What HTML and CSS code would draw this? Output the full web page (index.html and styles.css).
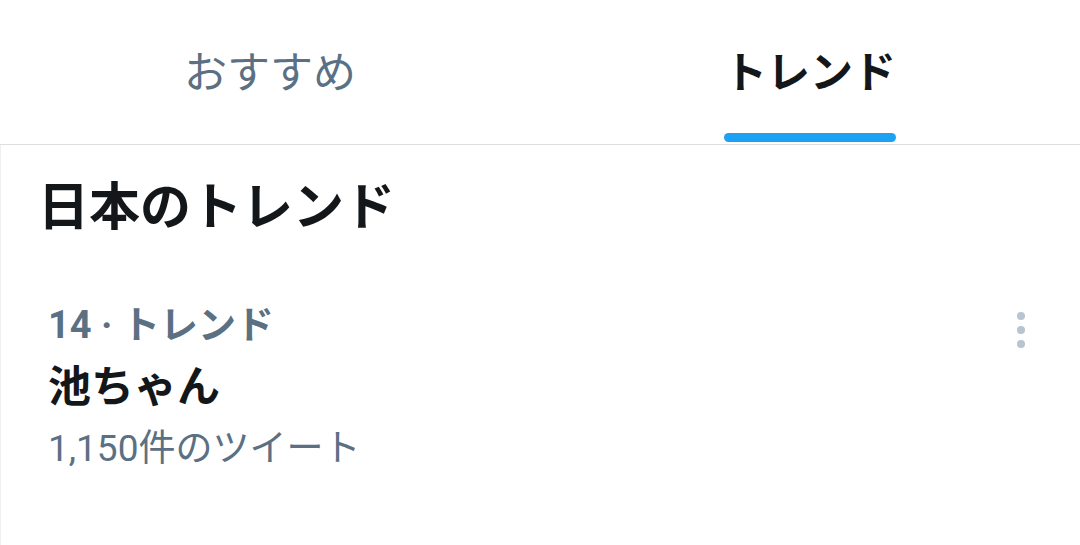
FILE: index.html
```html
<!DOCTYPE html>
<html lang="ja">
<head>
    <meta charset="UTF-8">
    <meta name="viewport" content="width=device-width, initial-scale=1.0">
    <title>トレンド</title>
    <link rel="stylesheet" href="styles.css">
</head>
<body>
    <div class="page">
        <!-- タブ -->
        <nav class="tabs">
            <div class="tab">
                <div class="tab-inner">
                    <span class="tab-label">おすすめ</span>
                </div>
            </div>
            <div class="tab active">
                <div class="tab-inner">
                    <span class="tab-label">トレンド</span>
                    <div class="tab-indicator"></div>
                </div>
            </div>
        </nav>

        <div class="content">
            <h1 class="section-title">日本のトレンド</h1>

            <div class="trend">
                <div class="trend-body">
                    <div class="trend-meta">14 · トレンド</div>
                    <div class="trend-name">池ちゃん</div>
                    <div class="trend-count">1,150件のツイート</div>
                </div>
                <div class="trend-more">
                    <span class="dot"></span>
                    <span class="dot"></span>
                    <span class="dot"></span>
                </div>
            </div>
        </div>
    </div>
</body>
</html>
```

FILE: styles.css
```css
body {
    margin: 0;
    padding: 0;
    background-color: #ffffff;
    font-family: Roboto, "Noto Sans CJK JP", sans-serif;
    color: #14171a;
}
.page {
    width: 1080px;
    height: 545px;
    overflow: hidden;
}
.tabs {
    display: flex;
    border-bottom: 1px solid #dcdfe2;
}
.tab {
    flex: 1;
    display: flex;
    justify-content: center;
    height: 144px;
}
.tab-inner {
    display: flex;
    flex-direction: column;
    padding: 0 3px;
}
.tab-label {
    margin-top: 48px;
    line-height: 50px;
    font-size: 43px;
    color: #5b7083;
}
.tab.active .tab-label {
    font-weight: bold;
    color: #14171a;
}
.tab-indicator {
    margin-top: auto;
    margin-bottom: 2px;
    height: 9px;
    border-radius: 5px;
    background-color: #1da1f2;
}
.content {
    height: 400px;
    border-left: 1px solid #f0f0f0;
}
.section-title {
    margin: 0;
    padding: 33px 0 0 37px;
    line-height: 60px;
    font-size: 51px;
    font-weight: bold;
    color: #14171a;
}
.trend {
    display: flex;
    padding: 56px 55px 0 47px;
}
.trend-body {
    flex: 1;
}
.trend-meta {
    line-height: 62px;
    font-size: 38px;
    font-weight: bold;
    color: #5b7083;
}
.trend-name {
    line-height: 62px;
    font-size: 43px;
    font-weight: bold;
    color: #14171a;
}
.trend-count {
    line-height: 62px;
    font-size: 37px;
    color: #5b7083;
}
.trend-more {
    display: flex;
    flex-direction: column;
    gap: 6px;
    margin-top: 18px;
}
.dot {
    width: 8px;
    height: 8px;
    border-radius: 50%;
    background-color: #b8c4ce;
}
```
